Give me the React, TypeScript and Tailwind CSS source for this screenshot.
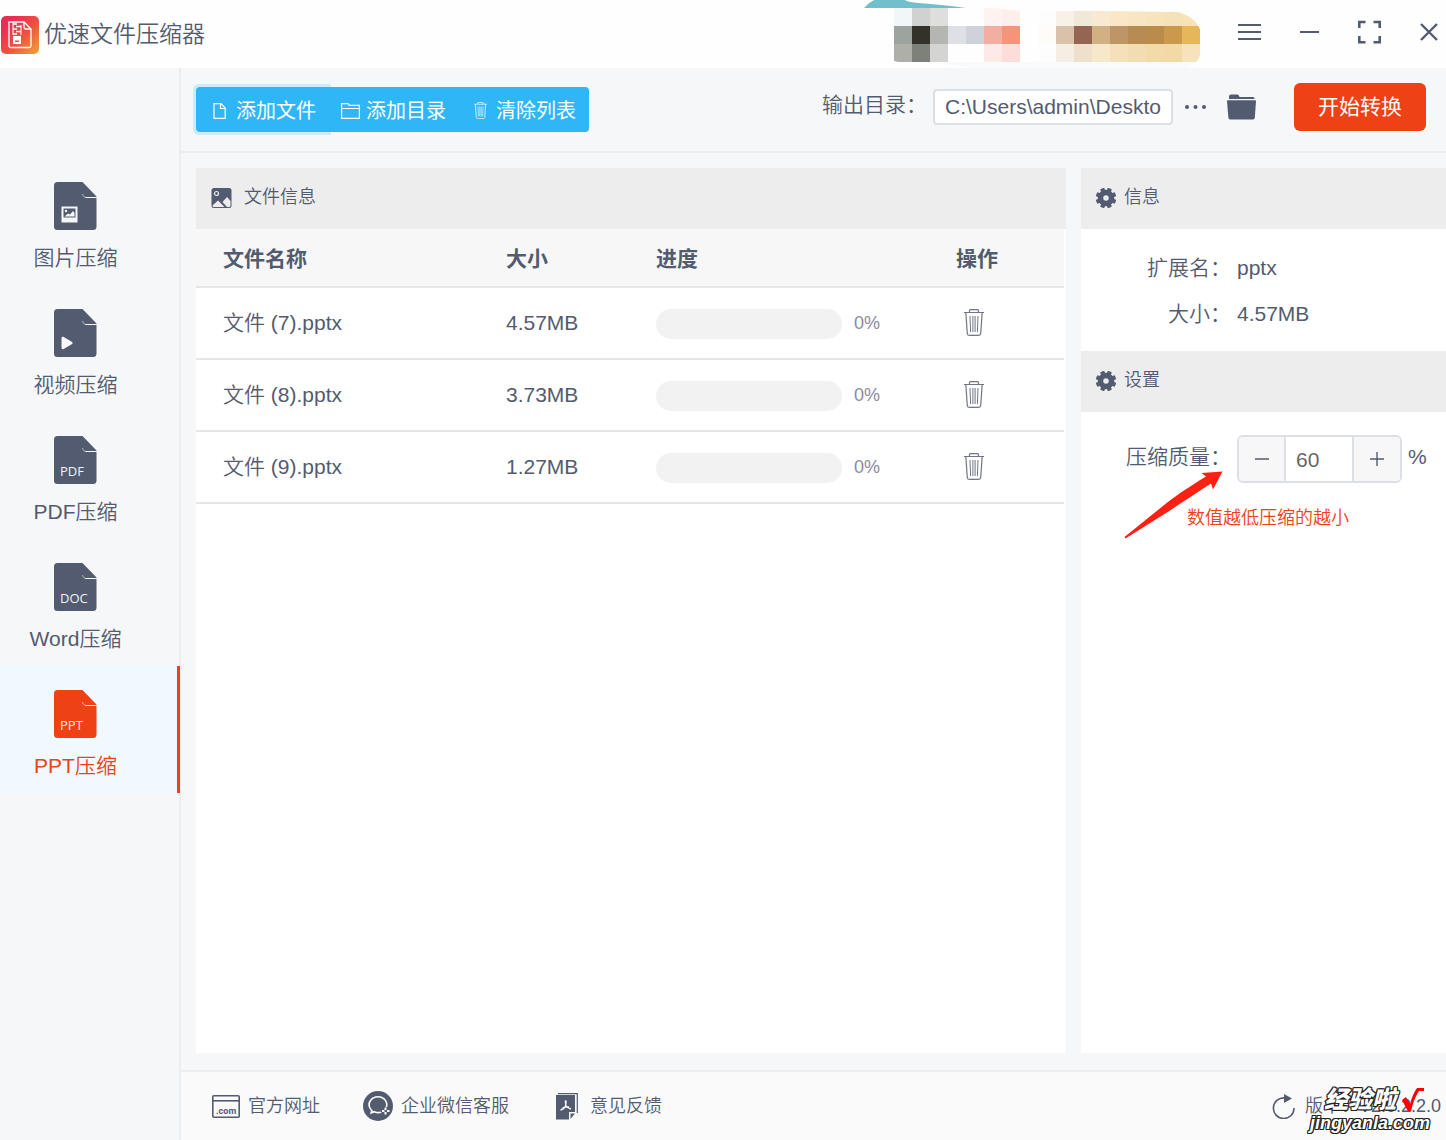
import { useState, type ReactNode } from "react";

type fileType = {
   id: number,
   name: string,
   size: string,
   progress: number,
}

type navItemType = {
   title: string,
   badge: ReactNode,
}

const files: fileType[] = [
   { id: 7, name: "文件 (7).pptx", size: "4.57MB", progress: 0 },
   { id: 8, name: "文件 (8).pptx", size: "3.73MB", progress: 0 },
   { id: 9, name: "文件 (9).pptx", size: "1.27MB", progress: 0 },
]

const badgeText = (text: string) => (
   <text x="6" y="40" fontSize="13" fontWeight="400" fill="#f0f2f6" fontFamily="Open Sans, sans-serif">{text}</text>
)

const navItems: navItemType[] = [
   {
      title: "图片压缩",
      badge: <>
         <path d="M7.500 24.500h16v16h-16z" fill="#f6f7f9" />
         <path d="M9.500 26.500h12v9h-12z" fill="#535b70" />
         <path d="M10.500 34.500l3.500-3 2 1 3-3.500 1.500 2v3.500z" fill="#f6f7f9" />
         <circle cx="12" cy="29" r="1.200" fill="#f6f7f9" />
      </>
   },
   {
      title: "视频压缩",
      badge: <path d="M7.500 29.500c0-1.500 1-2 2.200-1.400l8 4.600c1.200.7 1.200 1.900 0 2.600l-8 4.600c-1.200.7-2.200.1-2.200-1.400z" fill="#f6f7f9" />
   },
   { title: "PDF压缩", badge: badgeText("PDF") },
   { title: "Word压缩", badge: badgeText("DOC") },
   { title: "PPT压缩", badge: badgeText("PPT") },
]

// 18px blocks, one string per block, empty for none
const mosaic = [
   ["#f1f6f8", "#d0d2d1", "#dededc", "", "", "#fef3f1", "#fdefec", "", "#fdfdfd", "#f9f0e8", "#f1e9d8", "#f8ead2", "#f9e7c8", "#f8e5c2", "#f7e3bc", "#f6e2b8", "#f8e2b6"],
   ["#9da39f", "#32312a", "#b3b6b1", "#dfe0e6", "#cfd2d8", "#f1aea1", "#f69379", "", "#fdfcf8", "#dac1aa", "#946553", "#d1b084", "#bd9566", "#b78b52", "#ba8b4a", "#cb994c", "#e7b65b"],
   ["#aeafa8", "#7e8179", "#d4d4d3", "", "", "#fde9e5", "#fbdeda", "", "#fdfdfd", "#f6eee2", "#efe0cc", "#f6e8c9", "#f4e1ba", "#f2ddb2", "#f2dba9", "#f2d9a6", "#f6e2bb"],
]

const gearTeeth = [22.5, 67.5, 112.5, 157.5, 202.5, 247.5, 292.5, 337.5];

function Mosaic() {
   return (
      <svg className="h-[68px] w-[340px] shrink-0" viewBox="861 0 340 68" aria-hidden="true">
         <defs>
            <clipPath id="blob">
               <path d="M894 7h90l36 4h80l70 1c16-2 31 12 31 22v14c0 7-3 13-7 16H908l-14-3z" />
            </clipPath>
         </defs>
         <path d="M930 62h265c-4 4-7 6-10 6H975z" fill="#f9fafc" />
         <path d="M864 8c6-6 9-8 14-9h26c2 3 8 3 14 4 18 1 34 3 48 5z" fill="#71bfcd" />
         <g clipPath="url(#blob)" shapeRendering="crispEdges">
            {mosaic.map((row, y) => row.map((color, x) => color && (
               <rect key={`${x}-${y}`} x={894 + x * 18} y={8 + y * 18} width="18" height="18" fill={color} />
            )))}
         </g>
      </svg>
   )
}

function Logo() {
   return (
      <svg className="mt-0.5 size-[38px] shrink-0" viewBox="0 0 38 38" aria-hidden="true">
         <defs>
            <linearGradient id="logo" x1="0" y1="0" x2="1" y2="1">
               <stop offset="0.200" stopColor="#e72f55" />
               <stop offset="0.550" stopColor="#ed5140" />
               <stop offset="1" stopColor="#f2a334" />
            </linearGradient>
         </defs>
         <rect width="38" height="38" rx="5" fill="url(#logo)" />
         <g fill="none" stroke="#fff" strokeWidth="1.300">
            <path d="M8 6h15l7 7v17a1.500 1.500 0 0 1-1.500 1.500h-19A1.500 1.500 0 0 1 8 30z" />
            <path d="M23 6v5.500a1.500 1.500 0 0 0 1.500 1.500H30" />
            <path d="M12 6v13M20 9v10" strokeWidth="1" />
            <path d="M12 8h4M15 10.500h5M12 13h4M15 15.500h5M12 18h4" strokeWidth="1.400" />
         </g>
         <path d="M12 20h8v8h-8z" fill="#fff" />
         <path d="M14 24.500h4v1.500h-4z" fill="#e94b45" />
      </svg>
   )
}

function TrashIcon({ className }: { className: string }) {
   return (
      <svg className={className} viewBox="0 0 20 27" fill="none" stroke="currentColor" strokeWidth="1.200" aria-hidden="true">
         <path d="M0 3.500h20M5.500 3.500V1.800c0-.8.5-1.200 1.200-1.200h6.600c.7 0 1.200.4 1.200 1.200v1.700" />
         <path d="M1.800 3.500l1.500 21c.1 1.300.8 1.900 2 1.900h9.400c1.200 0 1.900-.6 2-1.900l1.500-21" />
         <path d="M6 7l.6 16M8.900 7v16M11.100 7v16M14 7l-.6 16" strokeWidth="1" />
      </svg>
   )
}

function GearIcon() {
   return (
      <svg className="size-5 shrink-0" viewBox="0 0 20 20" fill="#535b70" aria-hidden="true">
         <circle cx="10" cy="10" r="5.500" fill="none" stroke="#535b70" strokeWidth="5.500" />
         {gearTeeth.map(angle => (
            <rect key={angle} x="7.800" y="-.3" width="4.400" height="4" rx="1" transform={`rotate(${angle} 10 10)`} />
         ))}
      </svg>
   )
}

function PanelHead({ icon, title, className }: { icon: ReactNode, title: string, className: string }) {
   return (
      <h2 className={`flex h-[61px] items-center bg-[#ededed] pb-px text-[18px] ${className}`}>
         {icon}
         <span className="pb-px">{title}</span>
      </h2>
   )
}

function TitleBar() {
   return (
      <header className="flex h-[68px] items-center bg-[#fefefe] pr-[5px] pl-px">
         <Logo />
         <h1 className="ml-[5px] grow text-[23px] whitespace-nowrap">优速文件压缩器</h1>
         <Mosaic />
         <div className="ml-9 flex shrink-0 items-center gap-9 pb-1">
            <button type="button" aria-label="菜单">
               <svg className="size-6" viewBox="0 0 24 24" stroke="#535b70" strokeWidth="2"><path d="M1 5h23M1 12h23M1 19h23" /></svg>
            </button>
            <button type="button" aria-label="最小化">
               <svg className="size-6" viewBox="0 0 24 24" stroke="#535b70" strokeWidth="2"><path d="M3 12h19" /></svg>
            </button>
            <button type="button" aria-label="最大化">
               <svg className="size-6" viewBox="0 0 24 24" fill="none" stroke="#535b70" strokeWidth="2.600"><path d="M8.500 2H2.300v6M16.500 2h6.200v6M2.300 16v6.200h6.200M22.700 16v6.200h-6.200" /></svg>
            </button>
            <button type="button" aria-label="关闭">
               <svg className="size-6" viewBox="0 0 24 24" stroke="#535b70" strokeWidth="2.400"><path d="M4 4l16 16M20 4L4 20" /></svg>
            </button>
         </div>
      </header>
   )
}

function Sidebar({ active, setActive }: { active: string, setActive: (title: string) => void }) {
   return (
      <nav className="w-[181px] shrink-0 border-r-2 border-[#ecedef] pt-[90px]">
         {navItems.map(item => {
            const isActive = item.title === active;
            return (
               <button
                  key={item.title}
                  type="button"
                  onClick={() => setActive(item.title)}
                  className={`relative -mr-px flex h-[127px] w-[180px] flex-col items-center gap-[13px] border-r-[3px] pt-6 pr-[26px] ${isActive ? "border-[#ee4115] bg-[#f0f9ff] text-[#ee4115]" : "border-transparent"}`}
               >
                  <svg className="h-12 w-[43px]" viewBox="0 0 43 48" aria-hidden="true">
                     <path d="M3.500 0H28.500L42.500 14.500V44.500a3.500 3.500 0 0 1-3.500 3.500h-35.500A3.500 3.500 0 0 1 0 44.500V3.500A3.500 3.500 0 0 1 3.500 0z" fill={isActive ? "#ee4115" : "#535b70"} />
                     <path d="M28.500 12c.5 2.500 2 3.500 4 3.500" fill="none" stroke="#f6f7f9" strokeWidth=".6" />
                     <path d="M31.500 15.500H43" stroke="#f6f7f9" strokeWidth="1" />
                     {item.badge}
                  </svg>
                  <span className="text-[21px]/[30px]">{item.title}</span>
               </button>
            )
         })}
      </nav>
   )
}

function Toolbar() {
   return (
      <div className="flex h-[85px] shrink-0 items-center justify-between border-b-2 border-[#ecedef] pr-5 pl-[15px]">
         <div className="isolate flex h-[45px] text-[20px] font-normal whitespace-nowrap text-white">
            <button type="button" className="relative flex w-[135px] items-center gap-2.5 rounded-l bg-[#2fb6f6] pt-0.5 pl-[17px] before:absolute before:-inset-y-[3px] before:right-0 before:-left-[3px] before:-z-10 before:rounded-l-md before:bg-[#cdebf9]">
               <svg className="h-4 w-[13px]" viewBox="0 0 13 16" fill="none" stroke="currentColor" strokeWidth="1.200" aria-hidden="true">
                  <path d="M1 .6h7L12.200 5v10.400H1zM7.500.6V5.500h4.700" />
               </svg>
               添加文件
            </button>
            <button type="button" className="flex w-[130px] items-center gap-1.5 bg-[#2fb6f6] pt-0.5 pl-2.5">
               <svg className="h-4 w-[19px]" viewBox="0 0 19 16" fill="none" stroke="currentColor" strokeWidth="1.200" aria-hidden="true">
                  <path d="M.6 15.400V.6H7l1.500 1.800h9.900v13zM.6 5.500h17.800" />
               </svg>
               添加目录
            </button>
            <button type="button" className="flex w-32 items-center gap-[9px] rounded-r bg-[#2fb6f6] pt-0.5 pl-[13px]">
               <TrashIcon className="h-[17px] w-[13px]" />
               清除列表
            </button>
         </div>
         <div className="flex items-center pb-[5px] text-[21px]">
            <label htmlFor="output" className="pb-1 whitespace-nowrap">输出目录：</label>
            <input
               id="output"
               type="text"
               defaultValue="C:\Users\admin\Deskto"
               className="ml-[6px] h-9 w-60 rounded border-2 border-[#dcdfe6] bg-white px-2.5"
            />
            <button type="button" aria-label="选择目录" className="ml-3">
               <svg className="h-6 w-[21px]" viewBox="0 0 21 24" fill="#535b70"><circle cx="2" cy="12" r="2" /><circle cx="10.500" cy="12" r="2" /><circle cx="19" cy="12" r="2" /></svg>
            </button>
            <button type="button" aria-label="打开目录" className="ml-[21px]">
               <svg className="h-[26px] w-[29px]" viewBox="0 0 29 26" fill="#535b70">
                  <path d="M2 5V2.500Q2 .5 4 .5h6q1.500 0 2 1.200l.5 1.300H26q1.500 0 1.500 1.500V5z" />
                  <path d="M0 7.200Q0 6.200 1 6.200h27q1 0 1 1l-1.200 16.600q-.2 1.700-1.800 1.700H3.200q-1.600 0-1.800-1.700z" />
               </svg>
            </button>
            <button type="button" className="ml-[38px] h-12 w-[132px] rounded-md bg-[#ee4115] font-normal whitespace-nowrap text-white">开始转换</button>
         </div>
      </div>
   )
}

function FileTable() {
   return (
      <table className="w-full table-fixed text-left text-[21px]">
         <thead>
            <tr className="h-[58px] border-b-2 border-[#e6e6e6] bg-[#f7f7f7]">
               <th className="pt-0.5 pl-[27px]">文件名称</th>
               <th className="w-[150px] pt-0.5 pl-[27px]">大小</th>
               <th className="w-[300px] pt-0.5 pl-[27px]">进度</th>
               <th className="w-[135px] pt-0.5 pl-[27px]">操作</th>
            </tr>
         </thead>
         <tbody>
            {files.map(file => (
               <tr key={file.id} className="h-[72px] border-b-2 border-[#e6e6e6]">
                  <td className="pl-[27px]">{file.name}</td>
                  <td className="pl-[27px]">{file.size}</td>
                  <td className="pl-[27px]">
                     <div className="flex items-center gap-3 pt-px">
                        <div role="progressbar" aria-valuenow={file.progress} aria-label={file.name} className="h-[30px] w-[186px] overflow-hidden rounded-full bg-[#f2f2f2]">
                           <div className="h-full bg-[#2fb6f6]" style={{ width: `${file.progress}%` }} />
                        </div>
                        <span className="text-[18px] text-[#878c9b]">{file.progress}%</span>
                     </div>
                  </td>
                  <td className="pl-[27px]">
                     <button type="button" aria-label="删除" className="block px-2 pb-0.5 text-[#6f7587]">
                        <TrashIcon className="h-[27px] w-5" />
                     </button>
                  </td>
               </tr>
            ))}
         </tbody>
      </table>
   )
}

function Settings() {
   const [quality, setQuality] = useState(60);

   return (
      <div className="relative pt-[23px]">
         <div className="flex items-center">
            <label htmlFor="quality" className="w-[150px] pb-1 text-right">压缩质量：</label>
            <div className="ml-1.5 flex h-12 w-[165px] overflow-hidden rounded-md border-2 border-[#dcdfe6]">
               <button type="button" aria-label="减少" onClick={() => setQuality(quality - 1)} className="flex w-[47px] items-center justify-center border-r-2 border-[#dcdfe6] bg-[#f7f7f7]">
                  <svg className="size-[14px]" viewBox="0 0 14 14" stroke="#535b70" strokeWidth="1.400"><path d="M0 7h14" /></svg>
               </button>
               <input
                  id="quality"
                  type="text"
                  value={quality}
                  onChange={e => setQuality(Number(e.target.value) || 0)}
                  className="w-0 grow bg-white pt-0.5 pl-2.5 text-[#666]"
               />
               <button type="button" aria-label="增加" onClick={() => setQuality(quality + 1)} className="flex w-12 items-center justify-center border-l-2 border-[#dcdfe6] bg-[#f7f7f7]">
                  <svg className="size-[14px]" viewBox="0 0 14 14" stroke="#535b70" strokeWidth="1.400"><path d="M0 7h14M7 0v14" /></svg>
               </button>
            </div>
            <span className="ml-1.5 pb-1">%</span>
         </div>
         <p className="mt-[21px] pl-[106px] text-[18px]/[28px] text-[#ee4115]">数值越低压缩的越小</p>
         <svg className="pointer-events-none absolute top-[59px] left-[43px] h-[68px] w-[99px]" viewBox="0 0 99 68" aria-hidden="true">
            <path d="M.5 66L42 32.500c14-11 28-19.500 40-27L77.500 2 98.500.5 89 18.500 87 12.500C74 21 60 30 46 39.500L1.500 67.500z" fill="#ff2014" />
         </svg>
      </div>
   )
}

function Footer() {
   return (
      <footer className="flex h-[70px] shrink-0 items-center border-t-2 border-[#ecedef] bg-[#fafafa] pr-[5px] pl-[31px] text-[18px] whitespace-nowrap">
         <a href="#site" className="flex items-center gap-2">
            <svg className="h-[23px] w-7" viewBox="0 0 28 23" aria-hidden="true">
               <rect x=".8" y=".8" width="26.400" height="21.400" rx="1" fill="none" stroke="#535b70" strokeWidth="1.600" />
               <path d="M1 5.800h26" stroke="#535b70" strokeWidth="1.600" />
               <text x="4" y="18.500" fontSize="9" fontWeight="bold" fill="#535b70" fontFamily="Roboto, sans-serif">.com</text>
            </svg>
            官方网址
         </a>
         <a href="#service" className="ml-[43px] flex items-center gap-2">
            <svg className="size-[30px]" viewBox="0 0 30 30" fill="none" aria-hidden="true">
               <circle cx="15" cy="15" r="15" fill="#535b70" />
               <path d="M23.500 16A8.900 8 0 1 0 8.800 19.500L8.200 22l3-1.300q3.500 1.500 7 .5" stroke="#fff" strokeWidth="1.600" />
               <path d="M22.500 16.500v2.500M22.500 21v2.500M19 20h2.500M24 20h2.500" stroke="#fff" strokeWidth="2" />
            </svg>
            企业微信客服
         </a>
         <a href="#feedback" className="ml-[47px] flex items-center gap-3">
            <svg className="h-[27px] w-[22px]" viewBox="0 0 22 27" fill="none" aria-hidden="true">
               <path d="M0 2h19v17h-6v7.500H0z" fill="#535b70" />
               <path d="M2 .6h19.300V20" stroke="#535b70" strokeWidth="1.200" />
               <path d="M14.500 26V20.500H19z" fill="#535b70" />
               <path d="M9.800 7.500c-1.500 1.500.5 3 0 5-.8 2-3 4-5.300 4.500M9.800 7.500c1 1.500-.5 3 0 5 1 1.800 3 3 5.200 3.500M6.500 15q3-1.500 6.500-1" stroke="#fff" strokeWidth="1.300" />
            </svg>
            意见反馈
         </a>
         <div className="ml-auto flex items-center gap-2.5">
            <svg className="h-[25px] w-[23px]" viewBox="0 0 23 25" fill="none" aria-hidden="true">
               <path d="M22 14A10.300 10.300 0 1 1 13 4" stroke="#535b70" strokeWidth="1.600" />
               <path d="M12 0l8 4.500L12 9z" fill="#535b70" />
            </svg>
            版本：V2.0.2.2.0
         </div>
      </footer>
   )
}

function Watermark() {
   return (
      <div className="pointer-events-none absolute right-4 bottom-[7px] font-bold text-white italic [text-shadow:1px_0_#222,-1px_0_#222,0_1px_#222,0_-1px_#222,1px_1px_#222,-1px_-1px_#222,1px_-1px_#222,-1px_1px_#222]">
         <div className="flex items-center justify-end gap-1.5 pr-1.5 text-[24px]/[26px] font-black">
            经验啦
            <svg className="h-6 w-[22px]" viewBox="0 0 22 24" aria-hidden="true">
               <path d="M0 12l4-3 4 7C10 9 12 4 15 0h7v3h-5C13 9 11 15 9 23.500H6z" fill="#f00" />
            </svg>
         </div>
         <div className="text-[18px]/[20px]">jingyanla.com</div>
      </div>
   )
}

function App() {
   const [active, setActive] = useState("PPT压缩");

   return (
      <div className="relative flex min-h-screen flex-col bg-[#f6f7f9] font-['Liberation_Sans','Noto_Sans_CJK_SC',sans-serif] font-[350] text-[#535b70]">
         <TitleBar />
         <div className="flex grow">
            <Sidebar active={active} setActive={setActive} />
            <div className="flex min-w-0 grow flex-col">
               <Toolbar />
               <main className="flex grow gap-[15px] pt-[15px] pb-[17px] pl-[15px]">
                  <section className="min-w-0 grow bg-white">
                     <PanelHead
                        title="文件信息"
                        className="gap-3 pl-[15px]"
                        icon={
                           <svg className="h-5 w-[21px]" viewBox="0 0 21 20" aria-hidden="true">
                              <rect x=".5" width="20" height="20" rx="2.500" fill="#535b70" />
                              <circle cx="5.500" cy="5.500" r="2" fill="none" stroke="#ededed" strokeWidth="1.200" />
                              <path d="M1.500 17.500l5.500-5 6.500 6.500H3q-1.500 0-1.500-1.500zM11.500 14l4.500-5 3.500 4v4.500q0 1.500-1.500 1.500h-2z" fill="#ededed" />
                           </svg>
                        }
                     />
                     <div className="pr-0.5">
                        <FileTable />
                     </div>
                  </section>
                  <aside className="w-[365px] shrink-0 bg-white text-[21px]">
                     <PanelHead title="信息" className="gap-2 pl-[15px]" icon={<GearIcon />} />
                     <dl className="grid grid-cols-[150px_1fr] gap-x-1.5 pt-4 pb-[14px] leading-[46px]">
                        <dt className="text-right">扩展名：</dt>
                        <dd>pptx</dd>
                        <dt className="text-right">大小：</dt>
                        <dd>4.57MB</dd>
                     </dl>
                     <PanelHead title="设置" className="gap-2 pl-[15px]" icon={<GearIcon />} />
                     <Settings />
                  </aside>
               </main>
               <Footer />
            </div>
         </div>
         <Watermark />
      </div>
   )
}

export default App
